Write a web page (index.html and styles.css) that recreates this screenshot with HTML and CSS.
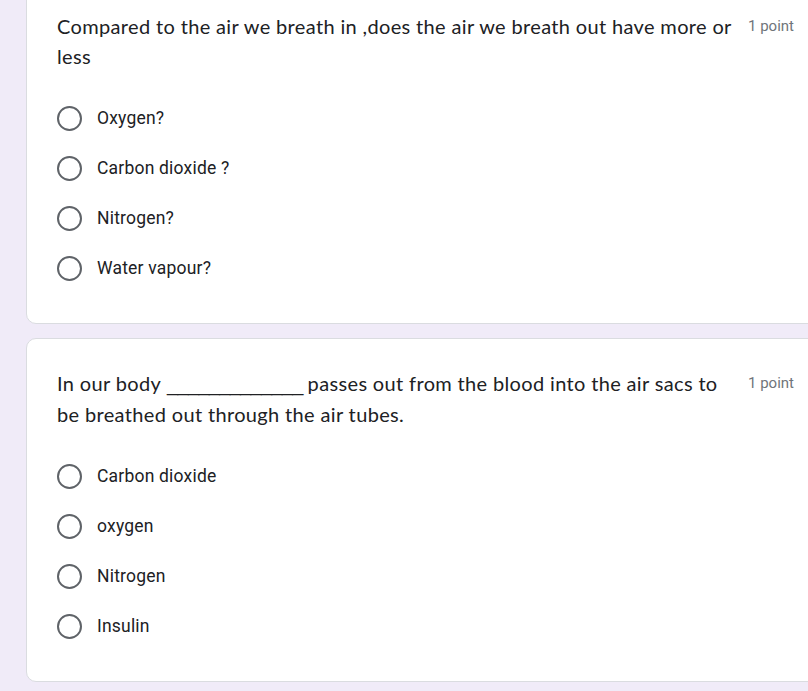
FILE: index.html
```html
<!DOCTYPE html>
<html>
<head>
<meta charset="utf-8">
<link rel="stylesheet" href="styles.css">
</head>
<body>
<div class="page">
  <div class="card">
    <div class="head">
      <div class="title">Compared to the air we breath in ,does the air we breath out have more or less</div>
      <div class="points">1 point</div>
    </div>
    <div class="options">
      <div class="opt"><span class="radio"></span><span class="label">Oxygen?</span></div>
      <div class="opt"><span class="radio"></span><span class="label">Carbon dioxide ?</span></div>
      <div class="opt"><span class="radio"></span><span class="label">Nitrogen?</span></div>
      <div class="opt"><span class="radio"></span><span class="label">Water vapour?</span></div>
    </div>
  </div>
  <div class="card">
    <div class="head">
      <div class="title">In our body<span class="blank">_____________</span>passes out from the blood into the air sacs to be breathed out through the air tubes.</div>
      <div class="points">1 point</div>
    </div>
    <div class="options">
      <div class="opt"><span class="radio"></span><span class="label">Carbon dioxide</span></div>
      <div class="opt"><span class="radio"></span><span class="label">oxygen</span></div>
      <div class="opt"><span class="radio"></span><span class="label">Nitrogen</span></div>
      <div class="opt"><span class="radio"></span><span class="label">Insulin</span></div>
    </div>
  </div>
</div>
</body>
</html>
```
FILE: styles.css
```css
html, body {
  margin: 0;
  padding: 0;
  overflow: hidden;
  background: #f0ebf8;
}
.page {
  width: 808px;
  height: 691px;
  overflow: hidden;
  padding-left: 26px;
  box-sizing: border-box;
}
.page > .card:first-child {
  margin-top: -19px;
}
.card {
  width: 798px;
  box-sizing: border-box;
  background: #fff;
  border: 1px solid #dadce0;
  border-radius: 10px;
  padding: 29px 29px 30px 30px;
  margin-bottom: 14px;
}
.head {
  display: flex;
  align-items: flex-start;
}
.title {
  flex: 1;
  font-family: Lato, "Open Sans", sans-serif;
  font-size: 20px;
  line-height: 30px;
  letter-spacing: 0.35px;
  color: #202124;
}
.blank {
  font-family: "Liberation Sans", sans-serif;
  letter-spacing: -0.7px;
  margin: 0 5px 0 6px;
}
.points {
  margin-left: 11px;
  font-family: Roboto, sans-serif;
  font-size: 15px;
  line-height: 30px;
  color: #70757a;
  white-space: nowrap;
}
.options {
  margin-top: 22px;
  display: flex;
  flex-direction: column;
}
.opt {
  display: flex;
  align-items: center;
  height: 50px;
  gap: 15px;
}
.radio {
  width: 25px;
  height: 25px;
  box-sizing: border-box;
  border: 2.5px solid #5f6368;
  border-radius: 50%;
  flex: none;
}
.label {
  font-family: Roboto, sans-serif;
  font-size: 17.5px;
  letter-spacing: 0.2px;
  color: #202124;
}
```
